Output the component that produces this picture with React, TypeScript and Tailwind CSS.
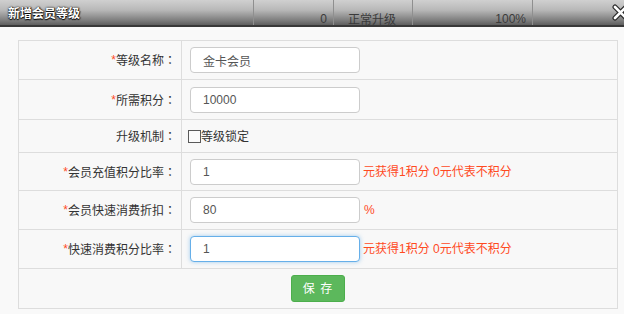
import React from "react";

const font = { fontFamily: '"Liberation Sans", "Noto Sans CJK SC", sans-serif' };
const cjk = { fontFamily: '"Noto Sans CJK SC", "Liberation Sans", sans-serif' };
const colon = { fontFamily: '"Noto Sans CJK TC", "Noto Sans CJK SC", sans-serif' };

function Label({ text, required = true }: { text: string; required?: boolean }) {
  return (
    <div className="w-[163px] shrink-0 border-r border-[#dddddd] flex items-center justify-end pr-[5px] text-[12px] text-[#333333]">
      {required && <span className="text-[#ff4a1f]">*</span>}
      <span style={cjk}>{text}</span>
      <span style={colon}>：</span>
    </div>
  );
}

function Field({ value, focused = false }: { value: string; focused?: boolean }) {
  return (
    <input
      readOnly
      value={value}
      className={
        focused
          ? "w-[170px] h-[26px] rounded-[4px] border border-[#66afe9] bg-white px-[12px] text-[12px] text-[#555555] outline-none shadow-[0_0_4px_rgba(102,175,233,0.6)]"
          : "w-[170px] h-[26px] rounded-[4px] border border-[#cccccc] bg-white px-[12px] text-[12px] text-[#555555] outline-none"
      }
      style={font}
    />
  );
}

export default function App() {
  return (
    <div className="w-[624px] h-[314px] overflow-hidden bg-[#f9f9f9]" style={font}>
      {/* title bar */}
      <div className="relative h-[27px] border-b-2 border-[#383838] bg-[linear-gradient(to_bottom,#d0d0d0_0%,#b8b8b8_40%,#828282_78%,#5e5e5e_100%)] overflow-hidden">
        <div className="flex h-full text-[12px] text-[#3a3a3a] leading-[14px]">
          <div className="w-[253px] shrink-0" />
          <div className="w-[80px] shrink-0 border-l border-[#8f8f8f] flex justify-end pr-[6px] pt-[12px]">0</div>
          <div className="w-[79px] shrink-0 border-l border-[#8f8f8f] pl-[14px] pt-[12px]" style={cjk}>正常升级</div>
          <div className="w-[120px] shrink-0 border-l border-[#8f8f8f] flex justify-end pr-[6px] pt-[12px]">100%</div>
          <div className="flex-1 border-l border-[#8f8f8f]" />
        </div>
        <div
          className="absolute left-[8px] top-[5px] text-[12px] font-bold text-white leading-[16px] [text-shadow:0_1px_1px_#000,0_0_2px_#111,1px_0_1px_#333]"
          style={cjk}
        >
          新增会员等级
        </div>
        <svg className="absolute right-[-5px] top-[4px]" width="17" height="17" viewBox="0 0 17 17">
          <path d="M3 3 L14 14 M14 3 L3 14" stroke="#2a2a2a" strokeWidth="5" strokeLinecap="round" />
          <path d="M3 3 L14 14 M14 3 L3 14" stroke="#ffffff" strokeWidth="2.6" strokeLinecap="round" />
        </svg>
      </div>

      {/* form */}
      <div className="pt-[13px] pl-[18px]">
        <div className="w-[600px] border border-[#dddddd] bg-[#f8f8f8]">
          <div className="flex h-[39px] border-b border-[#dddddd]">
            <Label text="等级名称" />
            <div className="flex items-center pl-[8px]">
              <Field value="金卡会员" />
            </div>
          </div>
          <div className="flex h-[40px] border-b border-[#dddddd]">
            <Label text="所需积分" />
            <div className="flex items-center pl-[8px]">
              <Field value="10000" />
            </div>
          </div>
          <div className="flex h-[33px] border-b border-[#dddddd]">
            <Label text="升级机制" required={false} />
            <div className="flex items-center pl-[6px] text-[12px] text-[#333333]">
              <span className="w-[13px] h-[13px] border border-[#5a5a5a] bg-[#fbfbfb] mt-[1px]" />
              <span style={cjk}>等级锁定</span>
            </div>
          </div>
          <div className="flex h-[38px] border-b border-[#dddddd]">
            <Label text="会员充值积分比率" />
            <div className="flex items-center pl-[8px]">
              <Field value="1" />
              <span className="ml-[3px] text-[12px] text-[#ff4a1f]">元获得1积分 0元代表不积分</span>
            </div>
          </div>
          <div className="flex h-[39px] border-b border-[#dddddd]">
            <Label text="会员快速消费折扣" />
            <div className="flex items-center pl-[8px]">
              <Field value="80" />
              <span className="ml-[4px] text-[12px] text-[#ff4a1f]">%</span>
            </div>
          </div>
          <div className="flex h-[39px] border-b border-[#dddddd]">
            <Label text="快速消费积分比率" />
            <div className="flex items-center pl-[8px]">
              <Field value="1" focused />
              <span className="ml-[3px] text-[12px] text-[#ff4a1f]">元获得1积分 0元代表不积分</span>
            </div>
          </div>
          <div className="flex h-[39px] items-center justify-center">
            <button className="w-[54px] h-[27px] rounded-[3px] border border-[#4cae4c] bg-[#5cb85c] text-[12px] text-white tracking-[1px]" style={font}>
              保 存
            </button>
          </div>
        </div>
      </div>
    </div>
  );
}
